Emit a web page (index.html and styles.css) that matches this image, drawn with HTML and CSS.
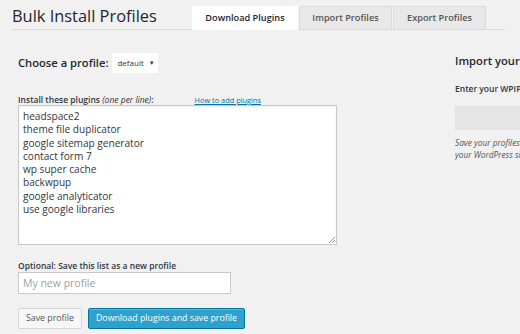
FILE: index.html
```html
<!DOCTYPE html>
<html>
<head>
<meta charset="utf-8">
<link rel="stylesheet" href="styles.css">
</head>
<body>
<div class="wrap">
  <div class="header">
    <h1 class="title">Bulk Install Profiles</h1>
    <nav class="tabs">
      <span class="tab active">Download Plugins</span>
      <span class="tab">Import Profiles</span>
      <span class="tab">Export Profiles</span>
    </nav>
  </div>
  <div class="content">
    <div class="left">
      <div class="choose">
        <span class="choose-label">Choose a profile:</span>
        <span class="select">default <span class="arrow">▼</span></span>
      </div>
      <div class="list-head">
        <span class="lbl">Install these plugins <em>(one per line)</em>:</span>
        <a class="howto">How to add plugins</a>
      </div>
      <div class="textarea">headspace2
theme file duplicator
google sitemap generator
contact form 7
wp super cache
backwpup
google analyticator
use google libraries<span class="grip"></span></div>
      <div class="lbl opt">Optional: Save this list as a new profile</div>
      <div class="input">My new profile</div>
      <div class="buttons">
        <span class="btn">Save profile</span>
        <span class="btn primary">Download plugins and save profile</span>
      </div>
    </div>
    <div class="right">
      <div class="r-title">Import your profiles</div>
      <div class="lbl r-lbl">Enter your WPIP key</div>
      <div class="r-input"></div>
      <div class="r-note">Save your profiles to our server<br>your WordPress sites</div>
    </div>
  </div>
</div>
</body>
</html>
```
FILE: styles.css
```css
html, body { margin: 0; padding: 0; }
body {
  background: #f1f1f1;
  font-family: "Open Sans", "Liberation Sans", sans-serif;
  color: #23282d;
  width: 520px;
  height: 334px;
  overflow: hidden;
}
.wrap { padding-left: 12px; }
.header {
  display: flex;
  align-items: flex-end;
  border-bottom: 1px solid #dadada;
  height: 29px;
  width: 493px;
}
.title {
  margin: 0;
  font-size: 16.4px;
  font-weight: 400;
  line-height: 22px;
  align-self: flex-start;
  margin-top: 5px;
  width: 180px;
}
.tabs { display: flex; margin-bottom: -1px; }
.tab {
  display: block;
  box-sizing: border-box;
  font-size: 9.2px;
  font-weight: 600;
  color: #555;
  background: #e8e8e8;
  border: 1px solid #dcdcdc;
  border-bottom: none;
  text-align: center;
  margin-right: 1px;
  height: 23px;
  line-height: 22px;
}
.tab:nth-child(1) { width: 106px; }
.tab:nth-child(2) { width: 93px; }
.tab:nth-child(3) { width: 93px; }
.tab.active {
  background: #fff;
  color: #23282d;
  border-color: #fff;
  height: 24px;
}
.content {
  display: flex;
  padding-left: 6px;
}
.left { width: 320px; flex: none; }
.choose {
  display: flex;
  align-items: center;
  margin-top: 23px;
  height: 20px;
}
.choose-label { font-size: 11.2px; font-weight: 600; margin-right: 4px; position: relative; top: -1px; }
.select {
  background: #fff;
  font-size: 8px;
  height: 20px;
  line-height: 20px;
  width: 46px;
  padding-left: 5px;
  color: #333;
  box-sizing: border-box;
}
.select .arrow { font-size: 6px; margin-left: 3px; position: relative; top: -1px; }
.list-head {
  display: flex;
  justify-content: space-between;
  align-items: flex-end;
  margin-top: 19px;
  height: 13px;
  width: 243px;
}
.lbl { font-size: 8.5px; font-weight: 600; color: #32373c; }
.lbl em { font-weight: 400; }
.howto {
  font-size: 7.4px;
  color: #0073aa;
  text-decoration: underline;
}
.textarea {
  position: relative;
  box-sizing: border-box;
  width: 319px;
  height: 140px;
  background: #fff;
  border: 1px solid #c9c9c9;
  box-shadow: inset 0 1px 2px rgba(0,0,0,0.07);
  white-space: pre;
  font-size: 10.1px;
  line-height: 13.3px;
  color: #32373c;
  padding: 4px 4px;
}
.grip {
  position: absolute;
  right: 1px;
  bottom: 1px;
  width: 6px;
  height: 6px;
  background: linear-gradient(135deg, transparent 45%, #999 45%, #999 55%, transparent 55%, transparent 70%, #999 70%, #999 80%, transparent 80%);
}
.opt { margin-top: 14px; line-height: 13px; }
.input {
  box-sizing: border-box;
  width: 213px;
  height: 22px;
  background: #fff;
  border: 1px solid #c9c9c9;
  font-size: 10.5px;
  line-height: 20px;
  padding-left: 4px;
  color: #a0a0a0;
}
.buttons { display: flex; gap: 6px; margin-top: 14px; }
.btn {
  box-sizing: border-box;
  height: 21px;
  line-height: 19px;
  font-size: 8.8px;
  padding: 0 7px;
  border: 1px solid #d6d6d6;
  background: #f7f7f7;
  color: #555;
  border-radius: 2px;
}
.primary {
  background: #2ea2cc;
  border-color: #0074a2;
  color: #fff;
  box-shadow: inset 0 1px 0 rgba(120,200,230,0.5);
}
.right {
  margin-left: 117px;
  white-space: nowrap;
  overflow: hidden;
  flex: 1;
  min-width: 0;
}
.r-title { font-size: 11.2px; font-weight: 600; margin-top: 23px; }
.r-lbl { margin-top: 15px; }
.r-input {
  width: 120px;
  height: 22px;
  background: #e5e5e5;
  border: 1px solid #e2e2e2;
  margin-top: 12px;
}
.r-note { font-size: 8.3px; font-style: italic; color: #555; margin-top: 7px; line-height: 12px; }
```
